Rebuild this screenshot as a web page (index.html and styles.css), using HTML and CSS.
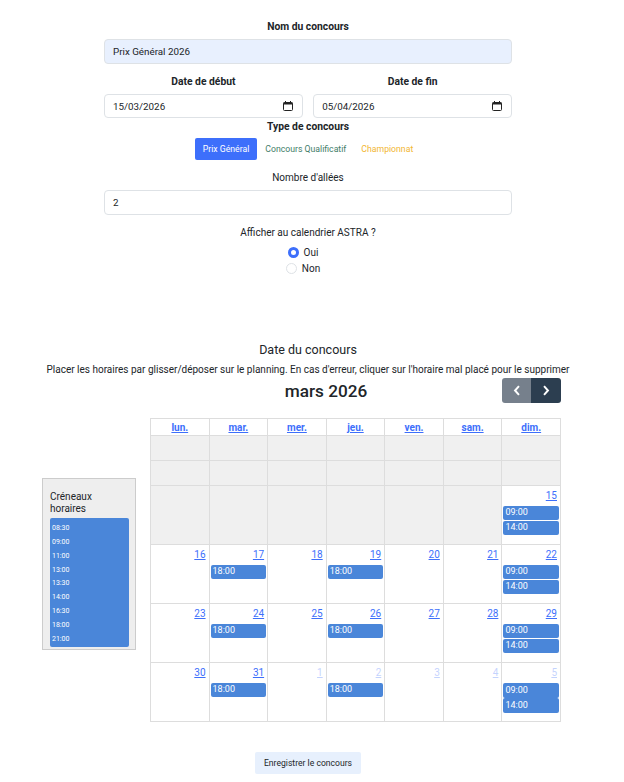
FILE: index.html
```html
<!DOCTYPE html>
<html lang="fr">
<head>
<meta charset="utf-8">
<title>Concours</title>
<link rel="stylesheet" href="styles.css">
</head>
<body>
<main class="page">
  <form class="form">
    <div class="label strong first">Nom du concours</div>
    <div class="input filled">Prix Général 2026</div>
    <div class="dates">
      <div class="date-col">
        <div class="label strong">Date de début</div>
        <div class="input date"><span>15/03/2026</span>
          <svg class="cal-icon" viewBox="0 0 10 10" width="10" height="10"><path d="M2.5 0v1.5M7.5 0v1.5" stroke="#222" stroke-width="1"/><rect x="0.5" y="1.5" width="9" height="8" rx="1" fill="none" stroke="#222"/><rect x="0.5" y="1.5" width="9" height="2" fill="#222"/></svg>
        </div>
      </div>
      <div class="date-col">
        <div class="label strong">Date de fin</div>
        <div class="input date"><span>05/04/2026</span>
          <svg class="cal-icon" viewBox="0 0 10 10" width="10" height="10"><path d="M2.5 0v1.5M7.5 0v1.5" stroke="#222" stroke-width="1"/><rect x="0.5" y="1.5" width="9" height="8" rx="1" fill="none" stroke="#222"/><rect x="0.5" y="1.5" width="9" height="2" fill="#222"/></svg>
        </div>
      </div>
    </div>
    <div class="label strong type-label">Type de concours</div>
    <div class="tabs">
      <span class="tab active">Prix Général</span>
      <span class="tab green">Concours Qualificatif</span>
      <span class="tab yellow">Championnat</span>
    </div>
    <div class="label alleys">Nombre d'allées</div>
    <div class="input">2</div>
    <div class="label astra">Afficher au calendrier ASTRA ?</div>
    <div class="radios">
      <div class="radio-row"><span class="radio on"></span>Oui</div>
      <div class="radio-row"><span class="radio"></span>Non</div>
    </div>
  </form>

  <h2 class="section-title">Date du concours</h2>
  <p class="hint">Placer les horaires par glisser/déposer sur le planning. En cas d'erreur, cliquer sur l'horaire mal placé pour le supprimer</p>

  <section class="schedule">
    <aside class="slots">
      <div class="slots-title">Créneaux horaires</div>
      <div class="slots-list">
        <span>08:30</span><span>09:00</span><span>11:00</span><span>13:00</span><span>13:30</span><span>14:00</span><span>16:30</span><span>18:00</span><span>21:00</span>
      </div>
    </aside>
    <div class="calendar">
      <div class="toolbar">
        <span class="spacer"></span>
        <h1 class="month">mars 2026</h1>
        <div class="nav">
          <span class="nav-btn prev"><svg viewBox="0 0 10 14" width="8" height="11"><path d="M7.5 1.500 2.500 7l5 5.500" fill="none" stroke="#fff" stroke-width="2.500"/></svg></span>
          <span class="nav-btn next"><svg viewBox="0 0 10 14" width="8" height="11"><path d="M2.500 1.500 7.500 7l-5 5.500" fill="none" stroke="#fff" stroke-width="2.500"/></svg></span>
        </div>
      </div>
      <table class="grid">
        <thead>
          <tr><th><a>lun.</a></th><th><a>mar.</a></th><th><a>mer.</a></th><th><a>jeu.</a></th><th><a>ven.</a></th><th><a>sam.</a></th><th><a>dim.</a></th></tr>
        </thead>
        <tbody>
          <tr class="short"><td class="off"></td><td class="off"></td><td class="off"></td><td class="off"></td><td class="off"></td><td class="off"></td><td class="off"></td></tr>
          <tr class="short"><td class="off"></td><td class="off"></td><td class="off"></td><td class="off"></td><td class="off"></td><td class="off"></td><td class="off"></td></tr>
          <tr class="week"><td class="off"></td><td class="off"></td><td class="off"></td><td class="off"></td><td class="off"></td><td class="off"></td>
            <td><a class="num">15</a><div class="ev">09:00</div><div class="ev">14:00</div></td></tr>
          <tr class="week"><td><a class="num">16</a></td><td><a class="num">17</a><div class="ev">18:00</div></td><td><a class="num">18</a></td><td><a class="num">19</a><div class="ev">18:00</div></td><td><a class="num">20</a></td><td><a class="num">21</a></td>
            <td><a class="num">22</a><div class="ev">09:00</div><div class="ev">14:00</div></td></tr>
          <tr class="week"><td><a class="num">23</a></td><td><a class="num">24</a><div class="ev">18:00</div></td><td><a class="num">25</a></td><td><a class="num">26</a><div class="ev">18:00</div></td><td><a class="num">27</a></td><td><a class="num">28</a></td>
            <td><a class="num">29</a><div class="ev">09:00</div><div class="ev">14:00</div></td></tr>
          <tr class="week"><td><a class="num">30</a></td><td><a class="num">31</a><div class="ev">18:00</div></td><td><a class="num other">1</a></td><td><a class="num other">2</a><div class="ev">18:00</div></td><td><a class="num other">3</a></td><td><a class="num other">4</a></td>
            <td><a class="num other">5</a><div class="ev merged">09:00</div><div class="ev merged">14:00</div></td></tr>
        </tbody>
      </table>
    </div>
  </section>

  <div class="actions"><span class="save">Enregistrer le concours</span></div>
</main>
</body>
</html>
```
FILE: styles.css
```css
* { box-sizing: border-box; }
html, body { margin: 0; padding: 0; background: #fff; }
body {
  font-family: Roboto, "Noto Sans", sans-serif;
  font-size: 10px;
  color: #212529;
  height: 782px;
  overflow: hidden;
}
.page { width: 616px; }
.form { width: 408px; margin: 0 auto; }
.label { text-align: center; line-height: 14px; padding-top: 1px; }
.strong { font-weight: 700; font-size: 10.300px; }
.first { padding-top: 20px; margin-bottom: 5px; }
.input {
  height: 25px;
  border: 1px solid #dee2e6;
  border-radius: 4px;
  padding: 0 8px;
  display: flex;
  align-items: center;
  background: #fff;
  font-size: 9.800px;
}
.filled { background: #e8f0fe; }
.dates { display: flex; gap: 10.500px; margin-top: 10px; }
.date-col { flex: 1; min-width: 0; }
.date-col .label { margin-bottom: 5px; }
.date { height: 24px; justify-content: space-between; padding-right: 9px; }
.cal-icon { display: block; }
.type-label { margin-top: 1px; }
.tabs { display: flex; justify-content: center; margin-top: 4px; }
.tab { height: 22px; padding: 0 8px; display: flex; align-items: center; border-radius: 2px; font-size: 8.700px; }
.active { background: #3d6ffb; color: #fff; }
.green { color: #3f7d68; }
.yellow { color: #f2b632; padding-left: 7px; }
.alleys { margin-top: 10px; margin-bottom: 5px; }
.astra { margin-top: 10px; }
.radios { margin-top: 4px; padding-right: 10px; display: flex; flex-direction: column; align-items: center; }
.radio-row { display: flex; align-items: center; gap: 5px; height: 16px; }
.radio { width: 11px; height: 11px; border-radius: 50%; border: 1px solid #dee2e6; background: #fff; }
.radio.on { border: 3px solid #3d6ffb; }
.section-title { margin: 65px 0 0; font-size: 12.500px; line-height: 17px; font-weight: 400; text-align: center; }
.hint { margin: 5px 0 0; line-height: 14px; text-align: center; }
.schedule { display: flex; gap: 14px; padding-left: 42px; margin-top: 1px; }
.slots {
  width: 94px;
  height: 172px;
  margin-top: 100px;
  background: #eee;
  border: 1px solid #ccc;
  padding: 12px 6px 2px 7px;
  display: flex;
  flex-direction: column;
}
.slots-title { line-height: 12px; height: 27px; margin-bottom: 0; }
.slots-list {
  height: 129px;
  background: #4a86d9;
  border-radius: 2px;
  color: #fff;
  font-size: 7px;
  display: flex;
  flex-direction: column;
  justify-content: space-around;
  padding: 3px 2px 1px;
}
.calendar { width: 411px; }
.toolbar { display: flex; justify-content: space-between; align-items: center; height: 25px; margin-bottom: 15px; }
.spacer { width: 0; }
.month { margin: 0; padding-top: 2px; font-size: 17.200px; font-weight: 500; line-height: 25px; color: #212529; }
.nav { display: flex; }
.nav-btn { width: 29.500px; height: 25px; display: flex; align-items: center; justify-content: center; }
.prev { background: #76808c; border-radius: 3px 0 0 3px; }
.next { background: #2c3e50; border-radius: 0 3px 3px 0; }
.grid { width: 411px; table-layout: fixed; border-collapse: collapse; border: 1px solid #ddd; }
.grid th, .grid td { border: 1px solid #ddd; padding: 0; vertical-align: top; }
.grid th { height: 17px; font-weight: 700; vertical-align: middle; }
.grid a { color: #3d6ffb; text-decoration: underline; }
.short td { height: 25px; }
.week td { height: 59px; }
.off { background: #f0f0f0; }
.num { display: block; text-align: right; padding: 3px 3px 0 0; line-height: 14px; height: 20px; }
.grid .other { color: #3d6ffb; opacity: 0.3; }
.ev {
  height: 14px;
  margin: 0 1px 1px 1px;
  background: #4a86d9;
  color: #fff;
  border-radius: 2px;
  font-size: 9px;
  line-height: 13px;
  padding-left: 2px;
}
.merged { margin-bottom: 0; height: 15px; line-height: 14px; }
.actions { display: flex; justify-content: center; margin-top: 30px; }
.save {
  height: 22px;
  padding: 0 9px;
  display: flex;
  align-items: center;
  background: #e7f0fd;
  border-radius: 2px;
  font-size: 8.600px;
}
```
